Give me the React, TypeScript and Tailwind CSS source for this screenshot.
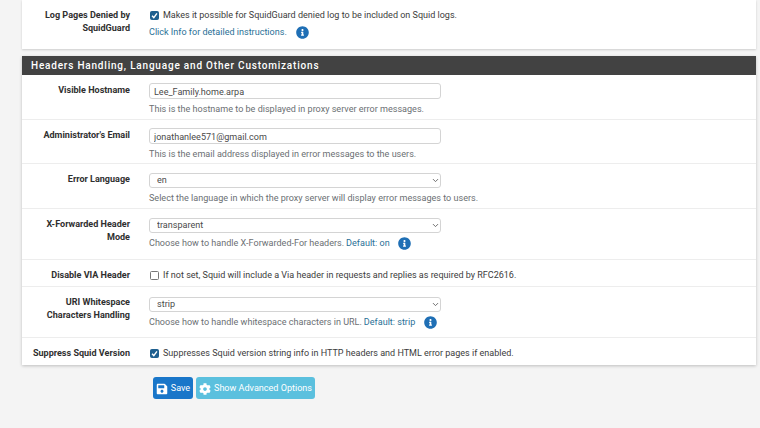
import { ChevronDown } from "lucide-react";
import type { ReactNode } from "react";
import { FaCog, FaInfoCircle, FaSave } from "react-icons/fa";

function Row({ label, height, children }: { label: ReactNode; height: string; children: ReactNode }) {
  return (
    <div className={`flex border-b border-[#ededed] last:border-b-0 ${height}`}>
      <div className="w-[108px] shrink-0 pt-[9px] text-right text-[9.05px] leading-[13px] font-bold text-[#2f2f2f]">{label}</div>
      <div className="ml-[19px] min-w-0 flex-1 pt-[8px]">{children}</div>
    </div>
  );
}

function Help({ children }: { children: ReactNode }) {
  return <p className="mt-[3px] flex items-center text-[9.05px] leading-[14px] text-[#6b6f73]">{children}</p>;
}

function Info({ left }: { left: string }) {
  return <FaInfoCircle className={`${left} shrink-0 text-[13px] text-[#1f6fb5]`} />;
}

function Field({ value }: { value: string }) {
  return (
    <input
      readOnly
      value={value}
      className="block h-[16px] w-[292px] rounded-[3px] border border-[#d4d4d4] bg-white px-[4px] pt-[1px] text-[9.05px] text-[#4a4a4a] outline-none"
    />
  );
}

function Select({ value, top = "mt-[1px]" }: { value: string; top?: string }) {
  return (
    <div className={`relative h-[15px] w-[292px] ${top}`}>
      <select
        value={value}
        onChange={() => {}}
        className="block h-full w-full appearance-none rounded-[3px] border border-[#d4d4d4] bg-white pl-[7px] text-[9.05px] text-[#4a4a4a] outline-none"
      >
        <option>{value}</option>
      </select>
      <ChevronDown className="absolute top-[3px] right-[1px] h-[9px] w-[9px] text-[#666]" strokeWidth={2.5} />
    </div>
  );
}

function Check({ checked, text }: { checked: boolean; text: string }) {
  return (
    <div className="flex items-center text-[9.02px] leading-[14px] text-[#3c3c3c]">
      <span
        className={`ml-[1px] flex h-[9px] w-[9px] shrink-0 items-center justify-center rounded-[1.5px] border ${
          checked ? "border-[#1e5f8f] bg-[#1e5f8f]" : "border-[#777] bg-white"
        }`}
      >
        {checked && (
          <svg viewBox="0 0 10 10" className="h-[7px] w-[7px]" fill="none" stroke="white" strokeWidth="2">
            <path d="M1.5 5.5 4 8l4.5-6" />
          </svg>
        )}
      </span>
      <span className="ml-[4px]">{text}</span>
    </div>
  );
}

export default function App() {
  return (
    <div className="h-[428px] w-[760px] overflow-hidden bg-[#f4f4f4] pr-[4px] pl-[22px] font-['Roboto',sans-serif]">
      <section className="h-[49px] bg-white shadow-[0_1px_2px_rgba(0,0,0,0.16)]">
        <Row label={<>Log Pages Denied by<br />SquidGuard</>} height="h-[49px]">
          <Check checked text="Makes it possible for SquidGuard denied log to be included on Squid logs." />
          <p className="mt-[3px] flex items-center text-[9.05px] leading-[14px] text-[#2a7096]">
            Click Info for detailed instructions.
            <Info left="ml-[9px]" />
          </p>
        </Row>
      </section>

      <section className="mt-[7px] bg-white shadow-[0_1px_3px_rgba(0,0,0,0.22)]">
        <h2 className="h-[19px] bg-[#424242] pl-[9px] text-[10px] leading-[20px] font-medium tracking-[0.8px] text-white">
          Headers Handling, Language and Other Customizations
        </h2>
        <Row label="Visible Hostname" height="h-[45px]">
          <Field value="Lee_Family.home.arpa" />
          <Help>This is the hostname to be displayed in proxy server error messages.</Help>
        </Row>
        <Row label="Administrator's Email" height="h-[44px]">
          <Field value="jonathanlee571@gmail.com" />
          <Help>This is the email address displayed in error messages to the users.</Help>
        </Row>
        <Row label="Error Language" height="h-[45px]">
          <Select value="en" />
          <Help>Select the language in which the proxy server will display error messages to users.</Help>
        </Row>
        <Row label={<>X-Forwarded Header<br />Mode</>} height="h-[51px]">
          <Select value="transparent" />
          <Help>
            Choose how to handle X-Forwarded-For headers.
            <span className="ml-[2px] text-[#2a7096]">Default: on</span>
            <Info left="ml-[8px]" />
          </Help>
        </Row>
        <Row label="Disable VIA Header" height="h-[27px]">
          <Check checked={false} text="If not set, Squid will include a Via header in requests and replies as required by RFC2616." />
        </Row>
        <Row label={<>URI Whitespace<br />Characters Handling</>} height="h-[51px]">
          <Select value="strip" top="mt-[2px]" />
          <Help>
            Choose how to handle whitespace characters in URL.
            <span className="ml-[2px] text-[#2a7096]">Default: strip</span>
            <Info left="ml-[9px]" />
          </Help>
        </Row>
        <Row label="Suppress Squid Version" height="h-[27px]">
          <Check checked text="Suppresses Squid version string info in HTTP headers and HTML error pages if enabled." />
        </Row>
      </section>

      <div className="mt-[12px] ml-[131px] flex gap-[3px] text-[9.05px] text-white">
        <button type="button" className="flex h-[22px] w-[40px] items-center justify-center gap-[3px] rounded-[3px] bg-[#1976c9] pt-[1px]">
          <FaSave className="text-[12px]" />
          Save
        </button>
        <button type="button" className="flex h-[22px] w-[119px] items-center justify-center gap-[3px] rounded-[3px] bg-[#5bc0de] pt-[1px] whitespace-nowrap">
          <FaCog className="text-[12px]" />
          Show Advanced Options
        </button>
      </div>
    </div>
  );
}
